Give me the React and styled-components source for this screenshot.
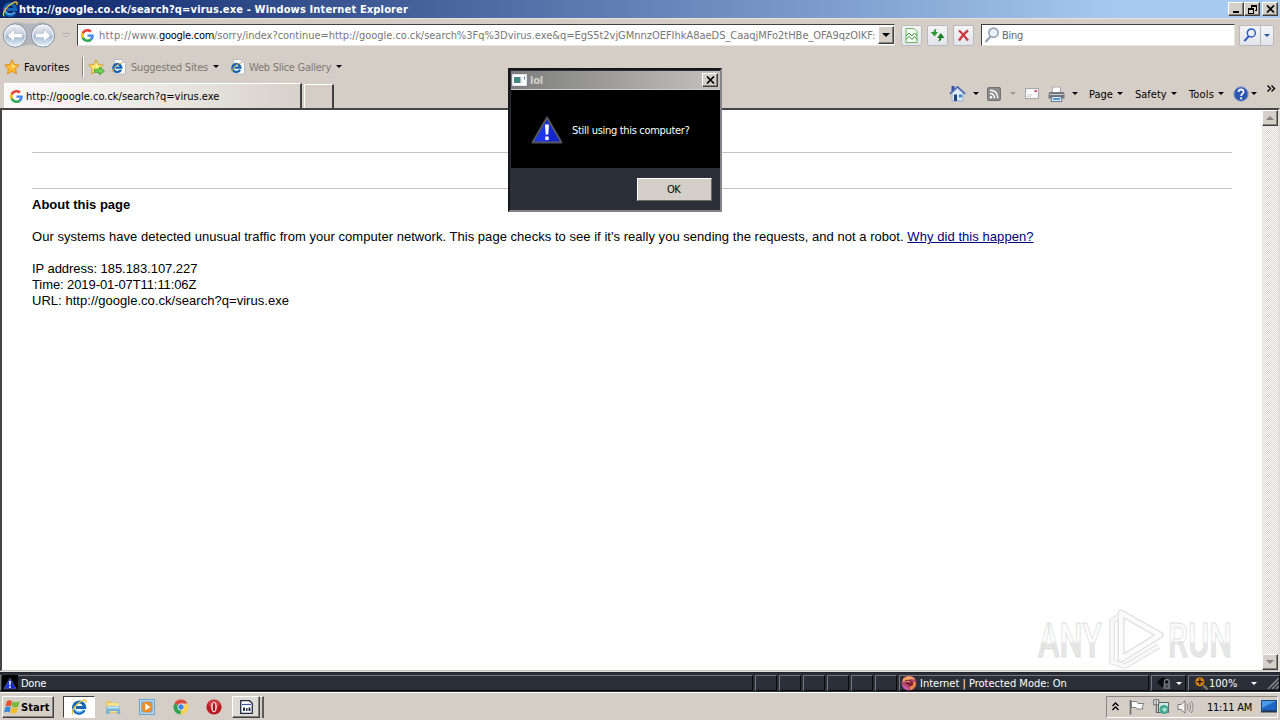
import React from "react";
import styled, { createGlobalStyle, css } from "styled-components";

const GlobalStyle = createGlobalStyle`
	* {
		box-sizing: border-box;
	}
	body {
		margin: 0;
		overflow: hidden;
		font-family: "DejaVu Sans Condensed", "DejaVu Sans", sans-serif;
		font-size: 11px;
		line-height: 14px;
		color: #000;
	}
	svg {
		display: block;
		flex: none;
	}
`;

const raised = css`
	border: 1px solid;
	border-color: #fff #404040 #404040 #fff;
	box-shadow: inset -1px -1px 0 #87837c;
	background: #d4d0c8;
`;

const Screen = styled.div`
	position: relative;
	width: 1280px;
	height: 720px;
	display: flex;
	flex-direction: column;
	background: #d4cec6;
	overflow: hidden;
`;

const Text = styled.span`
	white-space: pre;
	flex: none;
	padding-top: 2px;
	width: ${props => (props.$w ? `${props.$w}px` : "auto")};
	color: ${props => props.$color || "#000"};
	font-weight: ${props => (props.$bold ? 700 : 400)};
	letter-spacing: ${props => props.$ls || 0}px;
`;

const Gap = styled.span`
	flex: none;
	width: ${props => props.$w}px;
`;

const TitleBar = styled.header`
	flex: none;
	height: 18px;
	display: flex;
	align-items: center;
	padding: 0 2px;
	background: linear-gradient(90deg, #0a246a 0%, #a6caf0 88%);
`;

const CaptionButtons = styled.div`
	display: flex;
	margin-left: auto;
`;

const CaptionButton = styled.button`
	${raised}
	width: 16px;
	height: 14px;
	padding: 0;
	margin-left: ${props => (props.$apart ? 2 : 0)}px;
	display: grid;
	place-items: center;
`;

const AddressRow = styled.div`
	flex: none;
	height: 33px;
	display: flex;
	align-items: center;
	padding: 0 0 0 2px;
	border-top: 1px solid #e6e2dc;
`;

const AddressBox = styled.div`
	width: 818px;
	height: 22px;
	margin-left: 7px;
	display: flex;
	align-items: center;
	padding-left: 3px;
	background: #fff;
	border: 1px solid;
	border-color: #404040 #e8e4de #e8e4de #404040;
	overflow: hidden;
`;

const UrlClip = styled.div`
	display: flex;
	width: 778px;
	overflow: hidden;
	margin-left: 5px;
`;

const DropButton = styled.div`
	${raised}
	width: 16px;
	height: 18px;
	margin-left: auto;
	display: grid;
	place-items: center;
`;

const ToolButton = styled.div`
	width: 21px;
	height: 21px;
	margin-left: ${props => props.$ml || 5}px;
	display: grid;
	place-items: center;
	background: linear-gradient(#f4f4f6, #e2e5ec);
	border: 1px solid #b9b9bc;
	border-radius: 2px;
`;

const SearchBox = styled.div`
	width: 254px;
	height: 22px;
	margin-left: 7px;
	display: flex;
	align-items: center;
	gap: 2px;
	padding-left: 2px;
	background: #fff;
	border: 1px solid;
	border-color: #404040 #e8e4de #e8e4de #404040;
`;

const SearchSplit = styled(ToolButton)`
	width: 35px;
	grid-template-columns: 20px 13px;
`;

const SplitArrow = styled.div`
	height: 19px;
	width: 13px;
	display: grid;
	place-items: center;
	border-left: 1px solid #b9b9bc;
`;

const FavoritesRow = styled.div`
	flex: none;
	height: 31px;
	display: flex;
	align-items: center;
	padding-left: 4px;
`;

const Divider = styled.i`
	width: 2px;
	height: 20px;
	border-left: 1px solid #8b8780;
	border-right: 1px solid #fff;
`;

const TabRow = styled.div`
	flex: none;
	height: 26px;
	display: flex;
	align-items: flex-end;
	padding-left: 4px;
`;

const Tab = styled.div`
	width: 298px;
	height: 25px;
	display: flex;
	align-items: center;
	gap: 1px;
	padding: 0 0 0 5px;
	background: linear-gradient(90deg, #fbfaf9, #ece9e5 50%, #d6d1c9);
	border-top: 1px solid #fff;
	border-left: 1px solid #fff;
	border-right: 2px solid #404040;
`;

const NewTab = styled.div`
	width: 30px;
	height: 24px;
	margin-left: 2px;
	border: 1px solid #fff;
	border-bottom: 0;
	border-right: 2px solid #404040;
`;

const CommandBar = styled.div`
	height: 26px;
	margin-left: auto;
	display: flex;
	align-items: center;
	padding-right: 4px;
	padding-bottom: 3px;
`;

const Chevron = styled.div`
	align-self: flex-start;
	padding-top: 3px;
`;

const Viewport = styled.main`
	flex: none;
	height: 563px;
	display: flex;
	background: #fff;
	border-top: 2px solid #454545;
	border-left: 2px solid #454545;
	border-right: 2px solid #e2dfda;
	border-bottom: 1px solid #c9c6c1;
`;

const Page = styled.article`
	flex: 1;
	padding: 42px 30px 0;
	font: 13px/16px "Liberation Sans", Arial, sans-serif;
`;

const Rule = styled.hr`
	height: 1px;
	margin: 0 0 ${props => props.$mb}px;
	border: 0;
	background: #c4c4c4;
`;

const Paragraph = styled.p`
	margin: 0 0 16px;
	white-space: nowrap;
`;

const Link = styled.a`
	color: #00007c;
	text-decoration: underline;
	letter-spacing: 0.06px;
`;

const ScrollBar = styled.div`
	width: 16px;
	display: flex;
	flex-direction: column;
	justify-content: space-between;
	background: repeating-conic-gradient(#d8d3cd 0% 25%, #fff 0% 50%) 0 0 / 2px 2px;
`;

const ScrollButton = styled.div`
	${raised}
	height: 16px;
	display: grid;
	place-items: center;
`;

const StatusBar = styled.footer`
	flex: none;
	height: 22px;
	display: flex;
	gap: 2px;
	padding: 3px 0 1px;
	background: #2b2f37;
	border-top: 1px solid #e2dfda;
	border-bottom: 1px solid #fff;
	box-shadow: inset 0 1px 0 #20232a;
`;

const StatusPane = styled.div`
	flex: ${props => (props.$w ? "none" : 1)};
	width: ${props => props.$w}px;
	display: flex;
	align-items: center;
	padding-left: ${props => props.$pl || 0}px;
	border: 1px solid;
	border-color: #75787e #08090b #08090b #75787e;
`;

const TaskBar = styled.nav`
	flex: 1;
	display: flex;
	align-items: center;
	padding: 0 2px 0 2px;
`;

const StartButton = styled.button`
	${raised}
	width: 52px;
	height: 22px;
	display: flex;
	align-items: center;
	padding: 0 0 0 1px;
	font: inherit;
`;

const TaskButton = styled.div`
	width: ${props => props.$w}px;
	height: 22px;
	margin-left: ${props => props.$ml || 0}px;
	display: grid;
	place-items: center;
	border: 1px solid;
	border-color: ${props =>
		props.$active ? "#404040 #fff #fff #404040" : "#fff #404040 #404040 #fff"};
	background: ${props => (props.$active ? "#fff" : "#dedad4")};
	box-shadow: ${props =>
		props.$active ? "none" : "inset -1px -1px 0 #87837c"};
`;

const StackEdge = styled.i`
	width: 4px;
	height: 22px;
	border-right: 2px solid #5c5a56;
	border-top: 1px solid #fff;
`;

const Launcher = styled.div`
	width: 16px;
	margin-left: ${props => props.$ml}px;
`;

const Tray = styled.div`
	width: 172px;
	height: 22px;
	margin-left: auto;
	display: flex;
	align-items: center;
	padding-left: 5px;
	border: 1px solid;
	border-color: #8b8780 #fff #fff #8b8780;
`;

const Dialog = styled.section`
	position: absolute;
	left: 508px;
	top: 68px;
	width: 214px;
	height: 144px;
	display: flex;
	flex-direction: column;
	padding: 1px 0 0 1px;
	background: #2b2f37;
	border: 2px solid;
	border-color: #15161a #85838c #85838c #15161a;
`;

const DialogTitle = styled.div`
	height: 19px;
	display: flex;
	align-items: center;
	padding: 0 2px 0 1px;
	background: linear-gradient(90deg, #7d7d7d, #c4c2c0);
	border-bottom: 1px solid #d4d0c8;
`;

const DialogBody = styled.div`
	height: 78px;
	display: flex;
	align-items: center;
	gap: 9px;
	padding: 2px 0 0 20px;
	background: #000;
`;

const DialogFooter = styled.div`
	display: flex;
	justify-content: flex-end;
	padding: 10px 8px 0 0;
`;

const OkButton = styled.button`
	width: 75px;
	height: 23px;
	padding: 0 2px 0 0;
	font: inherit;
	background: #d4cec8;
	border: 1px solid;
	border-color: #fff #6e6b67 #6e6b67 #fff;
`;

const Watermark = styled.div`
	position: absolute;
	left: 1034px;
	top: 606px;
	svg {
		overflow: visible;
	}
`;

const Arrow = ({ color = "#000", up, w = 6 }) => (
	<svg width={w} height={w / 2} viewBox="0 0 6 3">
		<path d={up ? "M0 3h6L3 0z" : "M0 0h6L3 3z"} fill={color} />
	</svg>
);

const IeIcon = ({ size = 16 }) => (
	<svg width={size} height={size} viewBox="0 0 16 16">
		<path
			d="M13.200 11A5.600 5.600 0 1 1 13.700 8.500H5"
			fill="none"
			stroke="#1467b8"
			strokeWidth="3"
		/>
		<path
			d="M12.600 11A5.200 5.200 0 0 1 3.200 7.600"
			fill="none"
			stroke="#6cc6f5"
			strokeWidth="1.200"
		/>
		<path
			d="M2.400 15C-.6 14.400 3 7.600 7.600 4 12 .6 16.400-.6 14.800 4"
			fill="none"
			stroke="#e8c23c"
			strokeWidth="1.300"
		/>
	</svg>
);

const IePageIcon = () => (
	<svg width="15" height="16" viewBox="0 0 15 16">
		<path d="M2.500.5h8l3 3v11.500h-11z" fill="#fff" stroke="#b9bcc4" />
		<path d="M10.500.5v3h3" fill="#e4e8f0" stroke="#b9bcc4" />
		<path
			d="M9 10.800A4 4 0 1 1 9.400 8.600H3.400"
			fill="none"
			stroke="#1464b4"
			strokeWidth="2.300"
		/>
		<path d="M.8 13.200C1 9 6 3.800 10 4.200" fill="none" stroke="#d9a52a" />
	</svg>
);

const GoogleIcon = () => (
	<svg width="13" height="13" viewBox="0 0 48 48">
		<path fill="#ea4335" d="M24 9.500c3.500 0 6.700 1.200 9.200 3.600l6.900-6.900C35.900 2.400 30.500 0 24 0 14.600 0 6.500 5.400 2.600 13.200l8 6.200C12.400 13.700 17.700 9.500 24 9.500z" />
		<path fill="#4285f4" d="M47 24.600c0-1.600-.2-3.100-.4-4.600H24v9h12.900c-.6 3-2.300 5.500-4.800 7.200l7.700 6C44.400 38 47 31.800 47 24.600z" />
		<path fill="#fbbc05" d="M10.500 28.600A14.500 14.500 0 0 1 10.500 19.400l-8-6.200a24 24 0 0 0 0 21.600z" />
		<path fill="#34a853" d="M24 48c6.500 0 11.900-2.100 15.900-5.800l-7.700-6c-2.200 1.500-4.900 2.300-8.200 2.300-6.300 0-11.600-4.200-13.500-9.900l-8 6.200C6.500 42.600 14.600 48 24 48z" />
	</svg>
);

const NavArrows = () => (
	<svg width="55" height="27" viewBox="0 0 55 27">
		<defs>
			<linearGradient id="orb" x2="0" y2="1">
				<stop offset="0" stopColor="#f0f2f6" />
				<stop offset=".48" stopColor="#c3cfdf" />
				<stop offset=".52" stopColor="#a4b8d0" />
				<stop offset="1" stopColor="#e9f6fd" />
			</linearGradient>
		</defs>
		<path d="M5 4Q13-2 22 1.500h11Q42-2 50 4l3 9-7 11H34q-6-3-12 0H8L0 13z" fill="#b4b4bc" />
		{[13, 41].map(cx => (
			<g key={cx}>
				<circle cx={cx} cy="13.500" r="11.600" fill="url(#orb)" stroke="#8793a4" />
				<circle cx={cx} cy="13.500" r="10.400" fill="none" stroke="#fff" strokeOpacity=".8" />
			</g>
		))}
		<path d="M5.500 13.500l7-6.500v4.300h8v4.400h-8V20z" fill="#fff" stroke="#8ca0bb" strokeWidth=".5" />
		<path d="M48.500 13.500l-7-6.500v4.300h-8v4.400h8V20z" fill="#fff" stroke="#8ca0bb" strokeWidth=".5" />
	</svg>
);

const StarIcon = ({ add }) => (
	<svg width="17" height="16" viewBox="0 0 17 16">
		<path
			d="M8 .8l2.200 4.700 5.100.6-3.700 3.600 1 5.200L8 12.300l-4.600 2.600 1-5.200L.7 6.100l5.100-.6z"
			fill={add ? "#ffe46a" : "#ffb92e"}
			stroke={add ? "#c99a2a" : "#d98a1c"}
			strokeWidth=".9"
		/>
		<path d="M8 3l1.300 3.400 3 .5-4.300 2z" fill="#fff3a8" opacity=".8" />
		{add && (
			<path d="M6.500 10.200h5V8l5 4-5 3.800v-2.500h-5z" fill="#6fd253" stroke="#2d9a2a" strokeWidth=".8" />
		)}
	</svg>
);

const MagnifierIcon = ({ color, fill = "none", size = 16 }) => (
	<svg width={size} height={size} viewBox="0 0 16 16">
		<path d="M6.800 9.200L1.500 15" stroke={color} strokeWidth="2.400" />
		<circle cx="9.500" cy="5.700" r="4.600" fill={fill} stroke={color} strokeWidth="1.700" />
	</svg>
);

const BrokenPageIcon = () => (
	<svg width="13" height="15" viewBox="0 0 13 15">
		<path d="M1 .5h8L12 3.500v11H1z" fill="#f4fbf1" stroke="#6db264" />
		<path d="M1 8l3-3 3 3 2.500-3L12 8M1 11.500l3-3 3 3 2.500-3 2.500 3" fill="none" stroke="#3f9a3d" />
	</svg>
);

const RefreshIcon = () => (
	<svg width="15" height="14" viewBox="0 0 15 14">
		<path d="M6.500 1Q3.500 1 3.500 4H.6L4.500 8.500 8 4H5.800Q5.800 2.500 6.500 1z" fill="#2f9b34" />
		<path d="M8 13.500Q11.500 13 11.500 10h3L10.800 5 7 10h2.300Q9.300 12 8 13.500z" fill="#1f7f28" />
	</svg>
);

const StopIcon = () => (
	<svg width="13" height="13" viewBox="0 0 13 13">
		<path d="M2 1.500Q5 4 11 11.500M11 1.500Q7 4.500 2 11.500" fill="none" stroke="#c8383c" strokeWidth="2.200" />
	</svg>
);

const HomeIcon = () => (
	<svg width="17" height="17" viewBox="0 0 17 17">
		<path d="M3 8l5.500-5L14 8v8H3z" fill="#dfe9f8" stroke="#8ba3c8" strokeWidth=".8" />
		<path d="M2.500 1h3v4l-3 2z" fill="#3550a4" />
		<path d="M.8 8.800L8.500 1.800l7.700 7" fill="none" stroke="#4d6ab0" strokeWidth="1.600" />
		<path d="M5 9.500h3V16H5z" fill="#22427e" />
		<path d="M10 9.500h3v3h-3z" fill="#3c8ac8" />
	</svg>
);

const FeedIcon = () => (
	<svg width="14" height="14" viewBox="0 0 14 14">
		<rect x=".5" y=".5" width="13" height="13" rx="1.500" fill="#8b8b8b" stroke="#727272" />
		<circle cx="4" cy="10.300" r="1.200" fill="#fff" />
		<path d="M3 6.500q4.500 0 4.500 4.800M3 3.300q7.700 0 7.700 8" fill="none" stroke="#fff" strokeWidth="1.400" />
	</svg>
);

const MailIcon = () => (
	<svg width="14" height="11" viewBox="0 0 14 11">
		<rect x=".5" y=".5" width="13" height="10" fill="#f7f6f8" stroke="#a8a5aa" />
		<path d="M9.500 2h2.500v2H9.500z" fill="#d0575c" />
		<path d="M2 7h5M2 8.600h4" stroke="#c9c9d2" strokeWidth=".8" />
	</svg>
);

const PrinterIcon = () => (
	<svg width="17" height="16" viewBox="0 0 17 16">
		<path d="M4.500 1h8v6h-8z" fill="#fff" stroke="#9a9aa0" strokeWidth=".8" />
		<path d="M1.500 6h14l1 2v4.500H.5V8z" fill="#74777f" />
		<path d="M1.500 8.500h14" stroke="#c8cbd2" />
		<path d="M4 10.500h9l1 5H3z" fill="#e6f1fb" stroke="#52607a" strokeWidth=".8" />
		<path d="M5 12h7v2H5z" fill="#4f97d2" />
	</svg>
);

const HelpIcon = () => (
	<svg width="16" height="16" viewBox="0 0 16 16">
		<circle cx="8" cy="8" r="7.200" fill="#2c55b4" stroke="#8ea0c8" />
		<path d="M5.500 6q0-2.500 2.600-2.500T10.500 6q0 1.300-1.300 2-1 .6-1 2" fill="none" stroke="#fff" strokeWidth="1.800" />
		<circle cx="8.100" cy="12.300" r="1.100" fill="#fff" />
	</svg>
);

const WarningIcon = ({ w = 32, h = 28 }) => (
	<svg width={w} height={h} viewBox="0 0 32 28">
		<path d="M16 1.500L30.500 26.500H1.500z" fill="#1c35e6" stroke="#54565c" strokeWidth="2" strokeLinejoin="round" />
		<path d="M16 4L28 25H16z" fill="#0c1cae" opacity=".5" />
		<path d="M14 8.500h4l-.7 10h-2.600zM14.300 20.500h3.400v3.500h-3.400z" fill="#fff" />
	</svg>
);

const StatusWarning = styled.div`
	width: 16px;
	height: 16px;
	display: grid;
	place-items: center;
	background: #000;
`;

const AppIcon = () => (
	<svg width="15" height="12" viewBox="0 0 15 12">
		<path d="M.5.500h14v11H.5z" fill="#fff" stroke="#e4e6ec" />
		<path d="M2 3h6v6H2z" fill="#3f8c84" />
		<path d="M8 3h1.500v6H8z" fill="#a8c4cc" />
		<path d="M12 2.500h1v3h-1z" fill="#5d7aa8" />
	</svg>
);

const CloseGlyph = () => (
	<svg width="9" height="8" viewBox="0 0 9 8">
		<path d="M1 .500l7 7M8 .500l-7 7" stroke="#000" strokeWidth="1.700" />
	</svg>
);

const WindowsIcon = () => (
	<svg width="16" height="16" viewBox="0 0 16 16">
		<path d="M3 2Q5.500.5 8 2.100L6.900 7.300Q4.500 6 1.600 7.300z" fill="#e5512a" />
		<path d="M8.600 2.600Q11.500 4 15.600 2.200L14.200 7.700Q11 9.100 7.500 7.600z" fill="#79b83a" />
		<path d="M1.400 8Q4.300 6.800 6.800 8.100L5.500 13.500Q3 12.200 0 13.500z" fill="#3d87d8" />
		<path d="M7.400 8.500Q10.500 9.900 14 8.400L12.600 13.900Q9.500 15.200 6.100 13.800z" fill="#f3bc2c" />
	</svg>
);

const FolderIcon = () => (
	<svg width="16" height="16" viewBox="0 0 16 16">
		<path d="M1 2h5l1 1.500h6V14H1z" fill="#e6c460" />
		<path d="M2.500 4h11v9h-11z" fill="#f5e08c" />
		<path d="M1.500 7h13l.8 8H12v-3H4.500v3H1z" fill="#74b3dc" />
		<path d="M2 7.500h12v2H2z" fill="#c4e4f8" />
	</svg>
);

const PlayerIcon = () => (
	<svg width="16" height="16" viewBox="0 0 16 16">
		<rect x=".5" y=".5" width="15" height="15" fill="#b5d6ee" stroke="#68a5cc" />
		<rect x="2.500" y="2.500" width="11" height="11" fill="#6da9d4" />
		<circle cx="8" cy="8" r="5.600" fill="#f28c1e" />
		<path d="M6.300 4.600v6.800L11.500 8z" fill="#fff" />
	</svg>
);

const ChromeIcon = () => (
	<svg width="16" height="16" viewBox="0 0 16 16">
		<path d="M8 8L1.500 4.200A7.500 7.500 0 0 1 14.500 4.500H8z" fill="#dd4b3e" />
		<path d="M8 8l6.500-3.500A7.500 7.500 0 0 1 7.500 15.500z" fill="#fcd04a" />
		<path d="M8 8l-.5 7.500A7.500 7.500 0 0 1 1.500 4.200z" fill="#2fa254" />
		<circle cx="8" cy="8" r="3.500" fill="#f4f6f8" />
		<circle cx="8" cy="8" r="2.700" fill="#4285e0" />
	</svg>
);

const OperaIcon = () => (
	<svg width="16" height="16" viewBox="0 0 16 16">
		<circle cx="8" cy="8" r="7.600" fill="#b81a22" />
		<ellipse cx="8" cy="5" rx="5.500" ry="4" fill="#e0585c" opacity=".6" />
		<ellipse cx="8" cy="8" rx="2.800" ry="5.300" fill="#f7eeee" />
		<ellipse cx="8" cy="8" rx="1.300" ry="4.300" fill="#a3141c" />
	</svg>
);

const BatchIcon = () => (
	<svg width="13" height="14" viewBox="0 0 13 14">
		<path d="M.7.700h9L12.300 3.500v9.800H.7z" fill="#fff" stroke="#222a48" strokeWidth="1.300" />
		<path d="M2 4.500h9" stroke="#3a5aa8" strokeWidth="1.200" />
		<path d="M3 7.500h2v3.500H3zM6 8h1.500v3H6zM8.500 7.500h2V11h-2z" fill="#2c3350" />
	</svg>
);

const GlobeIcon = () => (
	<svg width="16" height="16" viewBox="0 0 16 16">
		<circle cx="8" cy="8" r="7.500" fill="#b5486e" />
		<path d="M2 4q4-4 9-2 3 1 3 3-4-2-7 0L2 7z" fill="#f0a860" />
		<path d="M11 7q3-1 4 2-1 4-5 6-2-1-1-3 3-1 2-5z" fill="#e98a3a" />
		<path d="M4 5q4-1 8 2v3q-2 2-5 0Q4 9 4 5z" fill="#7a1c3c" />
		<path d="M4.500 6.500q3-1 5 1" fill="none" stroke="#f0c070" />
		<path d="M1 10q4 0 7 5-5 0-7-5z" fill="#c85ab0" />
	</svg>
);

const LockIcon = () => (
	<svg width="17" height="16" viewBox="0 0 17 16">
		<path d="M1 8q3-6 8-5l3 3-1 6H6z" fill="#0c0d10" />
		<path d="M8.500 9V6.500q0-2 2.300-2t2.300 2V9" fill="none" stroke="#7c7f86" strokeWidth="1.300" />
		<path d="M7.500 8.500h6.800V14H7.500z" fill="#686b72" />
		<path d="M10.400 10h1v2.500h-1z" fill="#17181c" />
	</svg>
);

const ZoomIcon = () => (
	<svg width="15" height="15" viewBox="0 0 15 15">
		<path d="M8.500 8.500l5 5" stroke="#84776a" strokeWidth="2.400" />
		<circle cx="5.800" cy="5.800" r="4.800" fill="#e08a1c" stroke="#4c3b24" />
		<path d="M5.800 2.800v6M2.800 5.800h6" stroke="#2b1a04" strokeWidth="1.400" />
	</svg>
);

const SizeGrip = () => (
	<svg width="12" height="12" viewBox="0 0 12 12">
		<path d="M1 12L12 1M5 12l7-7M9 12l3-3" stroke="#8b8e94" strokeWidth="1.300" />
	</svg>
);

const FlagIcon = () => (
	<svg width="16" height="16" viewBox="0 0 16 16">
		<path d="M1.500 1v14.500" stroke="#6c6a66" strokeWidth="1.600" />
		<path d="M2.500 2.500h5l1.500 2h6l-2 3 1 2.500H8L7 8.500H2.500z" fill="#fff" stroke="#77757a" strokeWidth=".9" />
	</svg>
);

const NetworkIcon = () => (
	<svg width="17" height="16" viewBox="0 0 17 16">
		<path d="M5.500 3.500h10v10h-10z" fill="#cdeae4" stroke="#56666a" />
		<circle cx="11" cy="10.500" r="4.600" fill="#46a890" />
		<path d="M9 10q3-3 5 0-1 3-3 3z" fill="#a8e4d0" />
		<path d="M.8.800h5v5h-5z" fill="#f5f5f5" stroke="#5a5a5e" />
		<path d="M3.300 2v3M3.300 6v7.500h3" fill="none" stroke="#5a5a5e" />
	</svg>
);

const SpeakerIcon = () => (
	<svg width="17" height="16" viewBox="0 0 17 16">
		<path d="M1 5.500h3L8 1.800v12.400l-4-3.700H1z" fill="#f3f2f0" stroke="#706e6c" strokeWidth=".9" />
		<path d="M10 5q2 3 0 6M12.200 3.500q3 4.500 0 9M14.300 2q3.600 6 0 12" fill="none" stroke="#85827e" strokeWidth=".9" />
	</svg>
);

const DesktopIcon = () => (
	<svg width="16" height="13" viewBox="0 0 16 13">
		<path d="M.5.500h15v10H.5z" fill="#1f66c4" stroke="#1b4482" />
		<path d="M1 1h14L1 8z" fill="#4b9be8" />
		<path d="M0 11h16v1.500H0z" fill="#26384e" />
	</svg>
);

const AnyRunLogo = () => (
	<svg width="202" height="68" viewBox="0 0 202 68">
		<defs>
			<linearGradient id="wm" x2="0" y2="1">
				<stop offset="0" stopColor="#f4f4f4" />
				<stop offset=".5" stopColor="#fff" />
				<stop offset=".55" stopColor="#e8e8e8" />
				<stop offset="1" stopColor="#e2e2e2" />
			</linearGradient>
		</defs>
		<g
			fill="url(#wm)"
			stroke="#dfdfdf"
			strokeWidth="1"
			fontFamily="Roboto, sans-serif"
			fontSize="48"
			fontWeight="500"
		>
			<text x="4" y="51" textLength="64" lengthAdjust="spacingAndGlyphs">ANY</text>
			<text x="134" y="51" textLength="64" lengthAdjust="spacingAndGlyphs">RUN</text>
		</g>
		<g fill="none" strokeLinejoin="round">
			<path d="M84 11l-6 4v41l13 4 34-20" stroke="#e4e4e4" strokeWidth="6" />
			<path d="M84 11l-6 4v41l13 4 34-20" stroke="#f8f8f8" strokeWidth="3.500" />
			<path d="M87 7v46l39-24z" stroke="#dedede" strokeWidth="7" />
			<path d="M87 7v46l39-24z" stroke="#fbfbfb" strokeWidth="4.500" />
		</g>
	</svg>
);

const urlTail =
	"/sorry/index?continue=http://google.co.ck/search%3Fq%3Dvirus.exe&q=EgS5t2vjGMnnzOEFIhkA8aeDS_CaaqjMFo2tHBe_OFA9qzOIKF:";

const App = () => (
	<>
		<GlobalStyle />
		<Screen>
			<TitleBar>
				<IeIcon />
				<Gap $w={1} />
				<Text $bold $color="#fff" $ls={0.153}>
					http://google.co.ck/search?q=virus.exe - Windows Internet Explorer
				</Text>
				<CaptionButtons>
					<CaptionButton>
						<svg width="8" height="8" viewBox="0 0 8 8">
							<path d="M1 6h6v2H1z" />
						</svg>
					</CaptionButton>
					<CaptionButton>
						<svg width="9" height="9" viewBox="0 0 9 9">
							<path d="M3 0h6v6H7V5h1V2H4v1H3zM0 3h6v6H0zM1 5v3h4V5z" fillRule="evenodd" />
						</svg>
					</CaptionButton>
					<CaptionButton $apart>
						<CloseGlyph />
					</CaptionButton>
				</CaptionButtons>
			</TitleBar>

			<AddressRow>
				<NavArrows />
				<Gap $w={5} />
				<svg width="8" height="5" viewBox="0 0 8 5">
					<path d="M1 .500h6L4 4z" fill="#e8e5e0" stroke="#a5a19b" strokeWidth=".8" />
				</svg>
				<AddressBox>
					<GoogleIcon />
					<UrlClip>
						<Text $ls={0.297} $color="#777">http://www.</Text>
						<Text $ls={-0.279}>google.com</Text>
						<Text $ls={-0.026} $color="#777">{urlTail}</Text>
					</UrlClip>
					<DropButton>
						<Arrow w={8} />
					</DropButton>
				</AddressBox>
				<ToolButton $ml={6}>
					<BrokenPageIcon />
				</ToolButton>
				<ToolButton>
					<RefreshIcon />
				</ToolButton>
				<ToolButton>
					<StopIcon />
				</ToolButton>
				<SearchBox>
					<MagnifierIcon color="#98a5b5" fill="#eaf3fb" />
					<Text $ls={-0.274} $color="#666">Bing</Text>
				</SearchBox>
				<SearchSplit $ml={4}>
					<MagnifierIcon color="#2c61c8" size={14} />
					<SplitArrow>
						<Arrow color="#2b5a9c" />
					</SplitArrow>
				</SearchSplit>
			</AddressRow>

			<FavoritesRow>
				<StarIcon />
				<Gap $w={3} />
				<Text $ls={0.1} $w={58}>Favorites</Text>
				<Divider />
				<Gap $w={4} />
				<StarIcon add />
				<Gap $w={7} />
				<IePageIcon />
				<Gap $w={4} />
				<Text $ls={-0.195} $w={82} $color="#7d7973">Suggested Sites</Text>
				<Arrow />
				<Gap $w={12} />
				<IePageIcon />
				<Gap $w={3} />
				<Text $ls={-0.257} $w={87} $color="#7d7973">Web Slice Gallery</Text>
				<Arrow />
			</FavoritesRow>

			<TabRow>
				<Tab>
					<GoogleIcon />
					<Gap $w={1} />
					<Text>http://google.co.ck/search?q=virus.exe</Text>
				</Tab>
				<NewTab />
				<CommandBar>
					<HomeIcon />
					<Gap $w={7} />
					<Arrow />
					<Gap $w={8} />
					<FeedIcon />
					<Gap $w={9} />
					<Arrow color="#a09b94" />
					<Gap $w={9} />
					<MailIcon />
					<Gap $w={9} />
					<PrinterIcon />
					<Gap $w={7} />
					<Arrow />
					<Gap $w={11} />
					<Text $w={28}>Page</Text>
					<Arrow />
					<Gap $w={12} />
					<Text $w={36}>Safety</Text>
					<Arrow />
					<Gap $w={12} />
					<Text $ls={0.16} $w={29}>Tools</Text>
					<Arrow />
					<Gap $w={9} />
					<HelpIcon />
					<Gap $w={2} />
					<Arrow />
					<Gap $w={10} />
					<Chevron>
						<svg width="9" height="7" viewBox="0 0 9 7">
							<path d="M.500.500l3 3-3 3M4.500.500l3 3-3 3" fill="none" stroke="#000" strokeWidth="1.400" />
						</svg>
					</Chevron>
				</CommandBar>
			</TabRow>

			<Viewport>
				<Page>
					<Rule $mb={35} />
					<Rule $mb={8} />
					<Paragraph>
						<b>About this page</b>
					</Paragraph>
					<Paragraph>
						<Text $ls={0.036}>
							Our systems have detected unusual traffic from your computer network. This page checks to see if it's really you sending the requests, and not a robot.{" "}
						</Text>
						<Link>Why did this happen?</Link>
					</Paragraph>
					<Paragraph>
						<Text $ls={-0.05}>IP address: 185.183.107.227</Text>
						<br />
						<Text $ls={-0.09}>Time: 2019-01-07T11:11:06Z</Text>
						<br />
						<Text $ls={0.036}>URL: http://google.co.ck/search?q=virus.exe</Text>
					</Paragraph>
				</Page>
				<ScrollBar>
					<ScrollButton>
						<Arrow up w={8} color="#87837c" />
					</ScrollButton>
					<ScrollButton>
						<Arrow w={8} color="#87837c" />
					</ScrollButton>
				</ScrollBar>
			</Viewport>

			<StatusBar>
				<StatusPane $pl={1}>
					<StatusWarning>
						<WarningIcon w={14} h={13} />
					</StatusWarning>
					<Gap $w={3} />
					<Text $color="#fff" $ls={-0.26}>Done</Text>
				</StatusPane>
				{[0, 1, 2, 3, 4, 5].map(pane => (
					<StatusPane key={pane} $w={22} />
				))}
				<StatusPane $w={250} $pl={1}>
					<GlobeIcon />
					<Gap $w={3} />
					<Text $color="#fff">Internet | Protected Mode: On</Text>
				</StatusPane>
				<StatusPane $w={35} $pl={4}>
					<LockIcon />
					<Gap $w={3} />
					<Arrow color="#fff" />
				</StatusPane>
				<StatusPane $w={92} $pl={5}>
					<ZoomIcon />
					<Gap $w={0} />
					<Text $color="#fff" $w={42}>100%</Text>
					<Arrow color="#fff" />
					<Gap $w={10} />
					<SizeGrip />
				</StatusPane>
			</StatusBar>

			<TaskBar>
				<StartButton>
					<WindowsIcon />
					<Gap $w={1} />
					<Text $bold $ls={0.1}>Start</Text>
				</StartButton>
				<TaskButton $active $w={32} $ml={9}>
					<IeIcon />
				</TaskButton>
				<Launcher $ml={10}>
					<FolderIcon />
				</Launcher>
				<Launcher $ml={18}>
					<PlayerIcon />
				</Launcher>
				<Launcher $ml={18}>
					<ChromeIcon />
				</Launcher>
				<Launcher $ml={17}>
					<OperaIcon />
				</Launcher>
				<TaskButton $w={28} $ml={10}>
					<BatchIcon />
				</TaskButton>
				<StackEdge />
				<Tray>
					<svg width="7" height="9" viewBox="0 0 7 9">
						<path d="M.500 4l3-3 3 3M.500 8l3-3 3 3" fill="none" stroke="#000" strokeWidth="1.300" />
					</svg>
					<Gap $w={10} />
					<FlagIcon />
					<Gap $w={8} />
					<NetworkIcon />
					<Gap $w={7} />
					<SpeakerIcon />
					<Gap $w={13} />
					<Text $ls={-0.246} $w={54}>11:11 AM</Text>
					<DesktopIcon />
				</Tray>
			</TaskBar>

			<Watermark>
				<AnyRunLogo />
			</Watermark>

			<Dialog>
				<DialogTitle>
					<AppIcon />
					<Gap $w={3} />
					<Text $bold $color="#d4d0c8" $ls={-0.19}>lol</Text>
					<CaptionButtons>
						<CaptionButton>
							<CloseGlyph />
						</CaptionButton>
					</CaptionButtons>
				</DialogTitle>
				<DialogBody>
					<WarningIcon />
					<Text $color="#fff" $ls={-0.312}>Still using this computer?</Text>
				</DialogBody>
				<DialogFooter>
					<OkButton>
						<Text $ls={-0.6}>OK</Text>
					</OkButton>
				</DialogFooter>
			</Dialog>
		</Screen>
	</>
);

export default App;
